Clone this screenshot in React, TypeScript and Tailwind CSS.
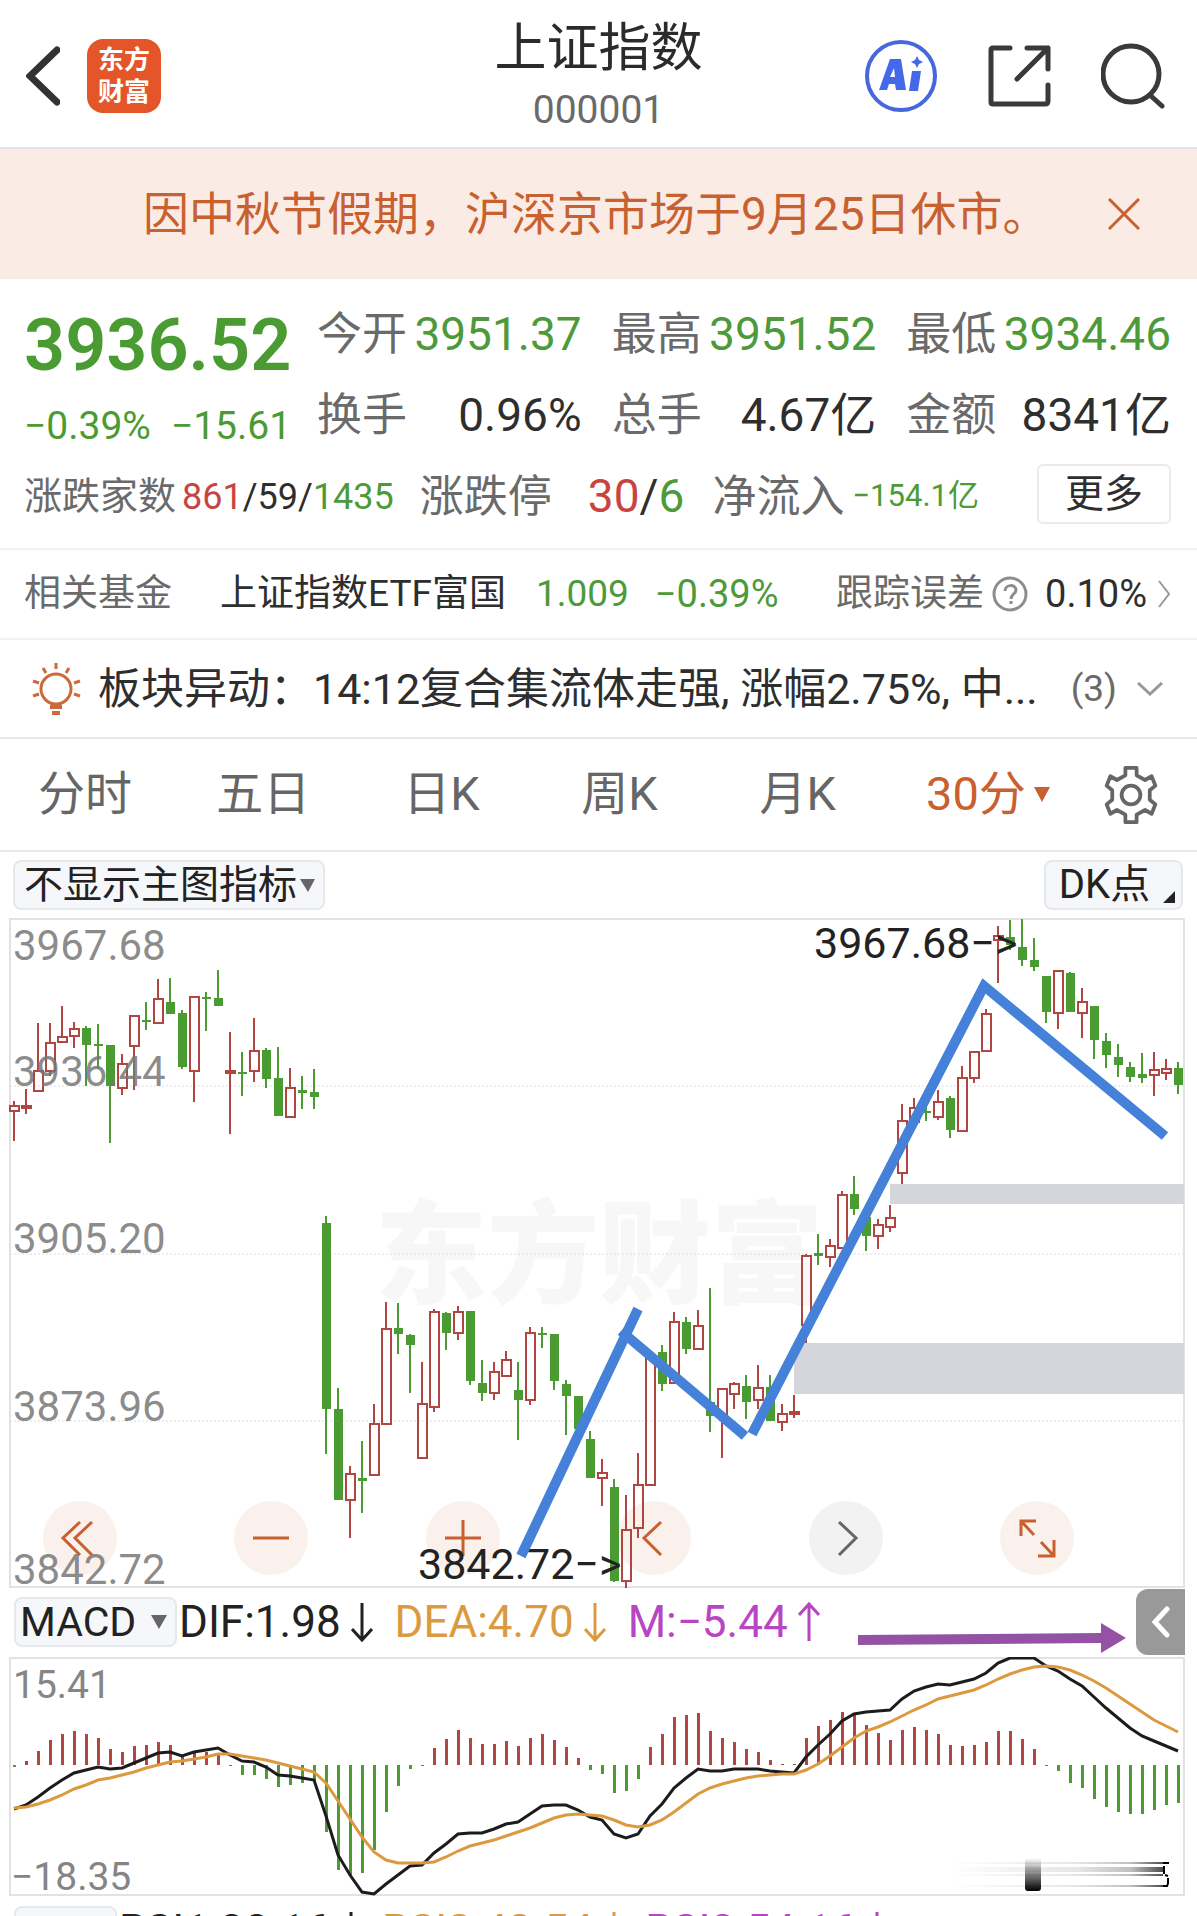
import type { ReactNode } from 'react';
import clsx from 'clsx';

type Candle = ['u' | 'd', number, number, number, number];

// direction, high, body top, body bottom, low
const CANDLES: Candle[] = [
  ['u', 183, 188, 193, 223], ['u', 171, 188, 190, 196], ['u', 105, 153, 173, 173], ['u', 105, 125, 153, 158],
  ['u', 88, 119, 124, 125], ['u', 104, 111, 118, 130], ['d', 108, 110, 127, 168], ['d', 106, 126, 127, 151],
  ['d', 127, 127, 168, 225], ['u', 136, 146, 170, 177], ['u', 98, 98, 128, 172], ['d', 84, 102, 104, 112],
  ['u', 61, 81, 105, 105], ['d', 60, 84, 96, 96], ['d', 92, 95, 149, 151], ['u', 79, 79, 153, 184],
  ['d', 74, 79, 81, 113], ['d', 52, 80, 88, 88], ['u', 114, 153, 155, 216], ['d', 134, 154, 155, 178],
  ['u', 100, 133, 153, 164], ['d', 130, 132, 161, 170], ['d', 129, 160, 198, 198], ['u', 150, 170, 199, 199],
  ['d', 158, 172, 175, 191], ['d', 151, 174, 179, 191], ['d', 298, 305, 491, 536], ['d', 470, 491, 582, 582],
  ['u', 548, 556, 582, 620], ['d', 523, 560, 563, 595], ['u', 486, 506, 557, 557], ['u', 384, 411, 506, 507],
  ['d', 385, 410, 416, 436], ['d', 416, 417, 427, 475], ['u', 444, 486, 540, 540], ['u', 391, 394, 489, 494],
  ['d', 394, 395, 415, 432], ['u', 388, 394, 415, 422], ['d', 393, 393, 463, 467], ['d', 442, 465, 475, 483],
  ['u', 444, 454, 475, 482], ['u', 433, 442, 458, 458], ['d', 444, 472, 482, 522], ['u', 409, 415, 482, 487],
  ['d', 409, 415, 417, 430], ['d', 416, 416, 463, 472], ['d', 462, 466, 478, 517], ['d', 478, 478, 511, 511],
  ['d', 513, 521, 560, 560], ['u', 541, 555, 560, 588], ['d', 561, 569, 663, 664], ['u', 577, 612, 663, 670],
  ['u', 535, 567, 610, 620], ['u', 436, 438, 567, 567], ['d', 427, 434, 466, 473], ['u', 394, 404, 465, 466],
  ['d', 399, 404, 431, 436], ['u', 392, 408, 431, 431], ['d', 370, 484, 498, 514], ['u', 471, 471, 498, 540],
  ['u', 464, 466, 476, 491], ['d', 457, 468, 484, 501], ['u', 447, 470, 482, 491], ['d', 457, 469, 503, 503],
  ['u', 486, 496, 504, 513], ['u', 477, 494, 496, 500], ['u', 336, 338, 407, 425], ['d', 316, 335, 338, 347],
  ['u', 321, 328, 339, 349], ['u', 273, 277, 330, 331], ['d', 258, 276, 291, 297], ['d', 294, 299, 318, 333],
  ['u', 301, 307, 318, 331], ['u', 287, 300, 309, 314], ['u', 186, 203, 255, 266], ['u', 180, 190, 204, 204],
  ['d', 188, 193, 195, 203], ['u', 172, 184, 199, 202], ['d', 178, 180, 212, 220], ['u', 148, 160, 213, 213],
  ['u', 133, 134, 160, 165], ['u', 91, 96, 133, 133], ['u', 8, 18, 22, 65], ['d', 2, 19, 27, 32],
  ['d', 1, 29, 42, 48], ['d', 20, 42, 49, 53], ['d', 58, 58, 94, 105], ['u', 52, 53, 95, 111],
  ['d', 54, 55, 94, 94], ['u', 70, 84, 95, 120], ['d', 88, 88, 122, 141], ['d', 115, 123, 137, 150],
  ['d', 126, 139, 147, 159], ['d', 144, 149, 159, 164], ['d', 135, 156, 160, 165], ['u', 134, 152, 157, 178],
  ['u', 141, 151, 155, 162], ['d', 144, 150, 167, 176],
];

const MACD_BARS = [
  -2, 4, 14, 25, 31, 34, 31, 27, 16, 13, 19, 20, 23, 20, 9, 12, 13, 12, -1, -10, -10, -14, -22, -20, -18,
  -16, -67, -105, -110, -108, -85, -47, -21, -4, -1, 17, 26, 35, 27, 21, 21, 24, 19, 27, 31, 25, 18, 7, -5,
  -9, -28, -26, -14, 18, 31, 48, 50, 52, 34, 27, 23, 16, 13, 5, 1, 1, 27, 39, 45, 53, 50, 40, 32, 25, 35,
  38, 35, 31, 20, 19, 20, 23, 34, 34, 26, 16, -1, -6, -18, -23, -34, -42, -47, -49, -49, -45, -40, -38,
];

const DIF = [
  152, 148, 140, 131, 123, 116, 113, 110, 112, 111, 106, 101, 96, 95, 99, 95, 93, 91, 98, 104, 105, 110,
  118, 119, 121, 123, 159, 198, 218, 235, 237, 227, 218, 209, 208, 196, 187, 177, 176, 176, 172, 167, 165,
  157, 149, 148, 148, 153, 160, 163, 177, 181, 177, 159, 147, 131, 121, 112, 114, 114, 112, 112, 112, 114,
  115, 116, 100, 88, 77, 64, 57, 55, 54, 53, 42, 34, 30, 27, 28, 25, 22, 16, 6, 1, 1, 1, 9, 14, 22, 29, 40,
  51, 61, 71, 79, 84, 89, 94,
];

const DEA = [
  151, 150, 147, 143, 138, 132, 128, 123, 121, 118, 115, 111, 108, 105, 104, 102, 100, 97, 97, 99, 101, 103,
  106, 109, 112, 115, 126, 144, 162, 180, 195, 203, 206, 206, 206, 205, 200, 194, 189, 186, 183, 179, 175,
  171, 166, 161, 158, 157, 158, 159, 163, 168, 170, 168, 163, 155, 146, 137, 131, 127, 124, 121, 119, 118,
  117, 117, 113, 107, 99, 90, 81, 74, 70, 65, 59, 53, 48, 42, 39, 36, 33, 28, 22, 17, 13, 10, 9, 10, 13, 18,
  24, 31, 39, 47, 55, 63, 69, 75,
];

const RED = '#b04542';
const GREEN = '#4a9b32';
const MACD_ZERO = 108;

const xAt = (i: number) => 5 + i * 12;
const toPoints = (values: number[]) => values.map((v, i) => `${xAt(i)},${v}`).join(' ');

function Header() {
  return (
    <header className="grid min-h-[149px] grid-cols-[1fr_auto_1fr] items-center border-b-2 border-[#e4e2e2] px-[26px] pt-1">
      <div className="flex items-center gap-[27px]">
        <button type="button" aria-label="返回">
          <svg width="34" height="60" viewBox="0 0 34 60" fill="none" stroke="#333" strokeWidth="7" strokeLinecap="round">
            <path d="M31 4 4 30l27 26" />
          </svg>
        </button>
        <a
          href="#home"
          className="flex h-[74px] w-[74px] flex-col items-center justify-center rounded-2xl bg-[#e5552a] text-[26px] leading-[32px] font-bold text-white"
        >
          <span>东方</span>
          <span>财富</span>
        </a>
      </div>
      <div className="flex flex-col items-center">
        <h1 className="text-[52px] leading-[68px] text-[#2b2b2b]">上证指数</h1>
        <p className="text-[39px] leading-[54px] text-[#6a6a6a]">000001</p>
      </div>
      <div className="flex items-center justify-end gap-[50px] pr-[6px]">
        <button type="button" aria-label="AI">
          <svg width="72" height="74" viewBox="0 0 72 74">
            <circle cx="36" cy="37" r="34" fill="none" stroke="#4767dc" strokeWidth="4" />
            <path
              fill="#4468ea"
              fillRule="evenodd"
              d="M14 51 25 20h11l5 31H31l-1-6h-6l-2 6zM25 38h5l-1-9zM47 32h9l-3 20h-9zM52 17l2 4 4 2-4 2-2 4-2-4-4-2 4-2z"
            />
          </svg>
        </button>
        <button type="button" aria-label="分享">
          <svg width="64" height="64" viewBox="0 0 64 64" fill="none" stroke="#3a3a3a" strokeWidth="5" strokeLinecap="round" strokeLinejoin="round">
            <path d="M23 4H6Q4 4 4 6v52q0 2 2 2h52q3 0 3-3V41M40 4h21v21M61 4 30 35" />
          </svg>
        </button>
        <button type="button" aria-label="搜索">
          <svg width="64" height="66" viewBox="0 0 64 66" fill="none" stroke="#3a3a3a" strokeWidth="5" strokeLinecap="round">
            <circle cx="30" cy="31" r="28" />
            <path d="m50 53 11 10" />
          </svg>
        </button>
      </div>
    </header>
  );
}

function Notice() {
  return (
    <div className="flex min-h-[130px] items-center bg-[#faece5] pr-[57px] pl-[143px] text-[#c8602f]">
      <p className="flex-1 text-[46px] leading-[60px] whitespace-nowrap">因中秋节假期，沪深京市场于9月25日休市。</p>
      <button type="button" aria-label="关闭">
        <svg width="32" height="32" viewBox="0 0 32 32" fill="none" stroke="currentColor" strokeWidth="3">
          <path d="m1 1 30 30M31 1 1 31" />
        </svg>
      </button>
    </div>
  );
}

function Stat({ label, value, green }: { label: string; value: string; green?: boolean }) {
  return (
    <div className="flex items-center justify-between leading-[81px]">
      <dt className="text-[45px] text-[#6a6a6a]">{label}</dt>
      <dd className={clsx('text-[46px]', green ? 'text-[#4c9a3a]' : 'text-[#2e2e2e]')}>{value}</dd>
    </div>
  );
}

function Quote() {
  return (
    <section className="border-b-2 border-[#f2f2f2] pt-[15px] pr-[26px] pb-[11px] pl-[24px]">
      <div className="flex items-start justify-between">
        <div className="text-[#4a9b32]">
          <p className="pt-[11px] text-[72px] leading-[82px] font-semibold">3936.52</p>
          <p className="flex gap-[20px] pt-[14px] text-[39px] leading-[50px] whitespace-nowrap">
            <span>−0.39%</span>
            <span>−15.61</span>
          </p>
        </div>
        <dl className="grid w-[854px] grid-cols-3 gap-x-[30px] whitespace-nowrap">
          <Stat label="今开" value="3951.37" green />
          <Stat label="最高" value="3951.52" green />
          <Stat label="最低" value="3934.46" green />
          <Stat label="换手" value="0.96%" />
          <Stat label="总手" value="4.67亿" />
          <Stat label="金额" value="8341亿" />
        </dl>
      </div>
      <div className="flex h-[81px] items-center whitespace-nowrap text-[#2e2e2e]">
        <span className="text-[38px] text-[#6a6a6a]">涨跌家数</span>
        <span className="ml-[6px] text-[36px]">
          <span className="text-[#c8453f]">861</span>/59/<span className="text-[#4c9a3a]">1435</span>
        </span>
        <span className="ml-[26px] text-[44px] text-[#6a6a6a]">涨跌停</span>
        <span className="ml-[36px] text-[46px]">
          <span className="text-[#c8453f]">30</span>/<span className="text-[#4c9a3a]">6</span>
        </span>
        <span className="ml-[28px] text-[44px] text-[#6a6a6a]">净流入</span>
        <span className="ml-[8px] text-[31px] text-[#4c9a3a]">−154.1亿</span>
        <button type="button" className="mb-[6px] ml-auto h-[60px] w-[134px] rounded-md border-2 border-[#ebebeb] text-[39px] leading-[50px]">
          更多
        </button>
      </div>
    </section>
  );
}

function FundRow() {
  return (
    <a href="#fund" className="flex min-h-[90px] items-center border-b-2 border-[#f2f2f2] pr-[26px] pl-[24px] text-[37px] whitespace-nowrap text-[#2e2e2e]">
      <span className="text-[#6a6a6a]">相关基金</span>
      <span className="ml-[48px]">上证指数ETF富国</span>
      <span className="ml-[30px] text-[#4c9a3a]">1.009</span>
      <span className="ml-[26px] text-[38px] text-[#4c9a3a]">−0.39%</span>
      <span className="ml-auto text-[#6a6a6a]">跟踪误差</span>
      <svg className="ml-[8px]" width="37" height="37" viewBox="0 0 37 37" fill="none" stroke="#8d8d8d" strokeWidth="3">
        <circle cx="18" cy="18" r="16" />
        <path d="M13 15c0-7 11-7 11-1 0 4-5 4-5 9M19 25v3" />
      </svg>
      <span className="ml-[16px] text-[38px]">0.10%</span>
      <svg className="ml-[11px]" width="13" height="28" viewBox="0 0 13 28" fill="none" stroke="#999" strokeWidth="2">
        <path d="m1 1 10 13L1 27" />
      </svg>
    </a>
  );
}

function NewsRow() {
  return (
    <div className="flex min-h-[99px] items-center border-b-2 border-[#e8e8e8] pr-[34px] pl-[31px] whitespace-nowrap">
      <svg width="52" height="54" viewBox="0 0 52 54" fill="none" stroke="#cd6a3c" strokeWidth="3">
        <circle cx="25" cy="27" r="15" />
        <path d="M19 45h12M21 51h8" strokeWidth="4" />
        <path d="M25 1v6M12 6l3 5M38 6l-3 5M2 19l6 2M49 19l-6 2M2 34l6-2M49 34l-6-2" />
      </svg>
      <p className="ml-[15px] flex-1 text-[43px] leading-[56px] text-[#2e2e2e]">板块异动：14:12复合集流体走强, 涨幅2.75%, 中...</p>
      <button type="button" aria-label="展开异动" className="flex items-center gap-[20px] text-[37px] text-[#6a6a6a]">
        (3)
        <svg width="26" height="14" viewBox="0 0 26 14" fill="none" stroke="#999" strokeWidth="3">
          <path d="m1 1 12 11L25 1" />
        </svg>
      </button>
    </div>
  );
}

const PERIODS = ['分时', '五日', '日K', '周K', '月K', '30分'];

function PeriodTabs() {
  return (
    <nav className="-ml-1 grid min-h-[113px] grid-cols-[repeat(6,minmax(0,1fr))_132px] items-center border-b-2 border-[#e8e8e8] text-[47px] text-[#666]">
      {PERIODS.map((p) => {
        const active = p === '30分';
        return (
          <button
            key={p}
            type="button"
            className={clsx('flex items-center justify-center gap-[8px] whitespace-nowrap', active && 'pl-[24px] text-[#c8602f]')}
          >
            {p}
            {active && (
              <svg width="16" height="15" viewBox="0 0 16 15" fill="currentColor">
                <path d="M0 0h16L8 15z" />
              </svg>
            )}
          </button>
        );
      })}
      <button type="button" aria-label="设置" className="flex justify-center">
        <svg width="56" height="60" viewBox="0 0 56 64" fill="none" stroke="#666" strokeWidth="4" strokeLinejoin="round">
          <path d="M22 3h12v8l9 5 7-4 4 10-6 5v10l6 5-4 10-7-4-9 5v8H22v-8l-9-5-7 4-4-10 6-5V27l-6-5 4-10 7 4 9-5z" />
          <circle cx="28" cy="32" r="10" />
        </svg>
      </button>
    </nav>
  );
}

const SELECT = 'appearance-none rounded-lg border-2 border-[#e6e9ec] bg-[#f5f7fa] text-[#222] outline-none';

function MainToolbar() {
  return (
    <div className="flex min-h-[66px] items-center justify-between pr-[14px] pl-[13px]">
      <div className="relative">
        <select aria-label="主图指标" className={clsx(SELECT, 'h-[50px] w-[312px] pl-[9px] text-[39px] leading-[46px]')}>
          <option>不显示主图指标</option>
        </select>
        <svg className="pointer-events-none absolute top-[19px] right-[10px]" width="15" height="13" viewBox="0 0 15 13" fill="#666">
          <path d="M0 0h15L8 13z" />
        </svg>
      </div>
      <div className="relative">
        <button type="button" className={clsx(SELECT, 'h-[50px] w-[139px] pr-[18px] text-[40px] leading-[42px]')}>
          DK点
        </button>
        <svg className="pointer-events-none absolute right-[8px] bottom-[7px]" width="12" height="12" viewBox="0 0 12 12" fill="#222">
          <path d="M12 0v12H0z" />
        </svg>
      </div>
    </div>
  );
}

const CHART_BUTTONS: { name: string; muted?: boolean; d: string }[] = [
  { name: '快退', d: 'M37 21 20 37l17 17M49 21 32 37l17 17' },
  { name: '缩小', d: 'M19 37h36' },
  { name: '放大', d: 'M19 37h36M37 19v36' },
  { name: '左移', d: 'M44 21 27 37l17 17' },
  { name: '右移', muted: true, d: 'm30 21 17 16-17 17' },
  { name: '全屏', d: 'M21 35V20h15M21 20l13 14M54 39v16H38M54 55 41 41' },
];

function CandleChart() {
  return (
    <div className="relative mr-[12px] ml-[9px]">
      <div className="absolute right-[111px] bottom-[12px] left-[34px] flex justify-between">
        {CHART_BUTTONS.map((b) => (
          <button
            key={b.name}
            type="button"
            aria-label={b.name}
            className={clsx('h-[74px] w-[74px] rounded-full', b.muted ? 'bg-[#f2f2f2] text-[#666]' : 'bg-[#fbf1ec] text-[#c8602f]')}
          >
            <svg viewBox="0 0 74 74" fill="none" stroke="currentColor" strokeWidth="3">
              <path d={b.d} />
            </svg>
          </button>
        ))}
      </div>
      <svg viewBox="0 0 1176 669" className="pointer-events-none relative block w-full overflow-visible">
        <text x="366" y="377" fontSize="112" fontWeight="900" fill="#000" opacity="0.028">东方财富</text>
        <g stroke="#dcdcdc" strokeWidth="1" strokeDasharray="2 2">
          <path d="M1 168h1174M1 336h1174M1 503h1174" />
        </g>
        <rect x="1" y="1" width="1174" height="668" fill="none" stroke="#e2e2e2" strokeWidth="2" />
        <rect x="881" y="266" width="294" height="20" fill="#d5d6dc" />
        <rect x="785" y="425" width="390" height="51" fill="#d5d6dc" />
        {CANDLES.map(([dir, high, top, bottom, low], i) => {
          const x = xAt(i);
          if (dir === 'd') {
            return (
              <g key={i} fill={GREEN}>
                <rect x={x - 1} y={high} width="2" height={low - high} />
                <rect x={x - 4} y={top} width="9" height={Math.max(bottom - top, 2)} />
              </g>
            );
          }
          return (
            <g key={i} fill="none" stroke={RED} strokeWidth="2">
              <path d={`M${x} ${high}V${top}M${x} ${bottom}V${low}`} />
              <rect x={x - 4} y={top} width="9" height={bottom - top} />
            </g>
          );
        })}
        <g fill="#777" fillOpacity="0.85" fontSize="42">
          <text x="4" y="42">3967.68</text>
          <text x="4" y="168">3936.44</text>
          <text x="4" y="335">3905.20</text>
          <text x="4" y="503">3873.96</text>
          <text x="4" y="666">3842.72</text>
        </g>
        <g fill="#222" fontSize="43">
          <text x="805" y="40">3967.68−&gt;</text>
          <text x="409" y="661">3842.72−&gt;</text>
        </g>
        <g fill="none" stroke="#4581d8" strokeWidth="10">
          <path d="M629 391 512 638" />
          <path d="m612 413 124 105" />
          <path d="m743 516 232-448 181 150" />
        </g>
      </svg>
    </div>
  );
}

function Arrow({ up }: { up?: boolean }) {
  return (
    <svg width="22" height="40" viewBox="0 0 22 40" fill="none" stroke="currentColor" strokeWidth="3">
      <path d={up ? 'M11 39V2M1 13 11 2l10 11' : 'M11 1v37M1 27l10 11 10-11'} />
    </svg>
  );
}

function Reading({ className, text, up }: { className: string; text: string; up?: boolean }) {
  return (
    <span className={clsx('flex items-center gap-[10px] whitespace-nowrap', className)}>
      {text}
      <Arrow up={up} />
    </span>
  );
}

function IndicatorBar({ name, selectClass, children }: { name: string; selectClass: string; children: ReactNode }) {
  return (
    <div className="mr-[12px] ml-[14px] flex h-[70px] items-center text-[44px] leading-[66px]">
      <div className="relative mr-[2px]">
        <select aria-label="副图指标" className={clsx(SELECT, 'block h-[50px] pl-[4px] text-[41px] leading-[46px]', selectClass)}>
          <option>{name}</option>
        </select>
        <svg className="pointer-events-none absolute top-[18px] right-[10px]" width="16" height="14" viewBox="0 0 16 14" fill="#666">
          <path d="M0 0h16L8 14z" />
        </svg>
      </div>
      {children}
    </div>
  );
}

function MacdChart() {
  return (
    <div className="mr-[12px] ml-[9px]">
      <svg viewBox="0 0 1176 239" className="block w-full">
        <defs>
          <linearGradient id="fadeDown" x1="0" y1="0" x2="0" y2="1">
            <stop offset="0" stopColor="#000" stopOpacity="0" />
            <stop offset="0.5" stopColor="#000" stopOpacity="0.5" />
            <stop offset="1" stopColor="#000" />
          </linearGradient>
          <linearGradient id="fadeRight">
            <stop offset="0" stopColor="#000" stopOpacity="0" />
            <stop offset="0.6" stopColor="#000" stopOpacity="0.1" />
            <stop offset="0.85" stopColor="#000" stopOpacity="0.25" />
            <stop offset="1" stopColor="#000" stopOpacity="0.7" />
          </linearGradient>
        </defs>
        <rect x="1" y="1" width="1174" height="237" fill="none" stroke="#e2e2e2" strokeWidth="2" />
        {MACD_BARS.map((v, i) => (
          <rect
            key={i}
            x={xAt(i) - 1}
            y={v > 0 ? MACD_ZERO - v : MACD_ZERO}
            width="3"
            height={Math.abs(v)}
            fill={v > 0 ? RED : GREEN}
          />
        ))}
        <polyline points={toPoints(DIF)} fill="none" stroke="#1c1c1c" strokeWidth="3" />
        <polyline points={toPoints(DEA)} fill="none" stroke="#dc9a40" strokeWidth="3" />
        <g fill="#858585" fontSize="39">
          <text x="4" y="41">15.41</text>
          <text x="2" y="233">−18.35</text>
        </g>
        <rect x="1016" y="201" width="16" height="33" rx="3" fill="url(#fadeDown)" />
        <g fill="url(#fadeRight)">
          <rect x="940" y="205" width="214" height="2" />
          <rect x="940" y="210" width="214" height="5" />
          <rect x="940" y="217" width="214" height="2" />
          <rect x="940" y="228" width="214" height="2" />
        </g>
        <path d="M1154 206h6M1155 209v8M1156 218l3 1M1159 221v6M1154 229h4l1-2" fill="none" stroke="#000" strokeWidth="2" />
      </svg>
    </div>
  );
}

export default function App() {
  return (
    <main className="h-screen w-full overflow-hidden bg-white font-[Roboto,'Noto_Sans_CJK_SC',sans-serif]">
      <Header />
      <Notice />
      <Quote />
      <FundRow />
      <NewsRow />
      <PeriodTabs />
      <MainToolbar />
      <CandleChart />
      <IndicatorBar name="MACD" selectClass="w-[163px]">
        <Reading text="DIF:1.98" className="text-[#222]" />
        <Reading text="DEA:4.70" className="ml-[22px] text-[#dc9a40]" />
        <Reading text="M:−5.44" up className="ml-[22px] text-[#b845c4]" />
        <svg className="mt-[32px] ml-[38px]" width="268" height="30" viewBox="0 0 268 30" fill="#9552a5">
          <path d="M0 12 243 10V0l25 15-25 15V20L0 22z" />
        </svg>
        <button type="button" aria-label="收起" className="ml-auto flex h-[66px] w-[49px] items-center justify-center rounded-l-xl bg-[#999]">
          <svg width="20" height="32" viewBox="0 0 20 32" fill="none" stroke="#fff" strokeWidth="5" strokeLinecap="round">
            <path d="M16 3 4 16l12 13" />
          </svg>
        </button>
      </IndicatorBar>
      <MacdChart />
      <IndicatorBar name="RSI" selectClass="w-[103px] pb-[6px]">
        <Reading text="RSI1:38.16" className="text-[#222]" />
        <Reading text="RSI2:42.54" className="ml-[20px] text-[#dc9a40]" />
        <Reading text="RSI3:54.16" className="ml-[20px] text-[#b845c4]" />
      </IndicatorBar>
    </main>
  );
}
